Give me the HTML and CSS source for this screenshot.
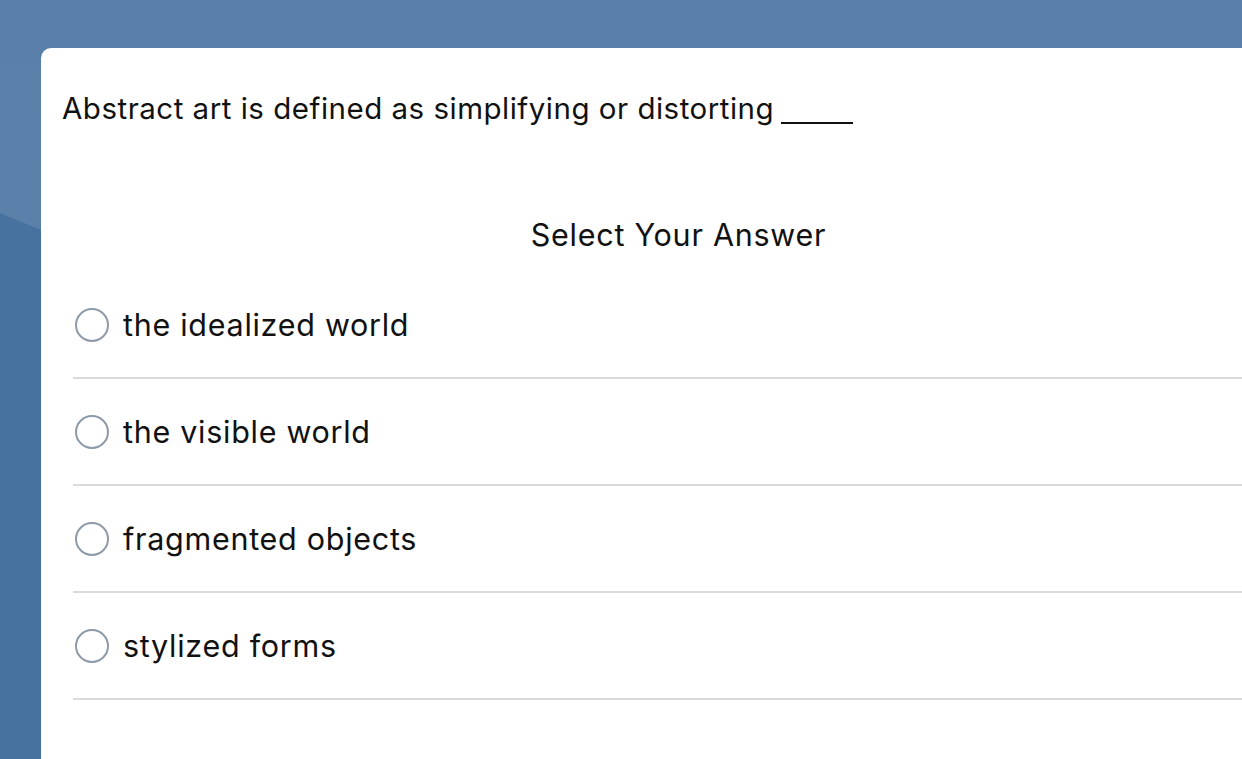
FILE: index.html
```html
<!DOCTYPE html>
<html>
<head>
<meta charset="utf-8">
<link rel="stylesheet" href="styles.css">
</head>
<body>
<div class="bg"><div class="bg-shade"></div></div>
<main class="card">
  <p class="question">Abstract art is defined as simplifying or distorting <span class="blank"></span></p>
  <h2 class="prompt">Select Your Answer</h2>
  <ul class="options">
    <li class="option"><span class="radio"></span><span class="label">the idealized world</span></li>
    <li class="option"><span class="radio"></span><span class="label">the visible world</span></li>
    <li class="option"><span class="radio"></span><span class="label">fragmented objects</span></li>
    <li class="option"><span class="radio"></span><span class="label">stylized forms</span></li>
  </ul>
</main>
</body>
</html>
```
FILE: styles.css
```css
html, body {
  margin: 0;
  height: 100%;
  overflow: hidden;
}
body {
  background: #5a80a9;
  padding: 48px 0 0 41px;
  box-sizing: border-box;
  font-family: Inter, "Noto Sans", "Liberation Sans", sans-serif;
  color: #111;
}
.bg {
  position: fixed;
  inset: 0;
  background: linear-gradient(180deg, #5a7fa8 0%, #5d83ab 100%);
  z-index: -1;
}
.bg-shade {
  position: absolute;
  inset: 0;
  background: #47729f;
  clip-path: polygon(0 213px, 41px 230px, 41px 100%, 0 100%);
}
.card {
  background: #fff;
  height: 100%;
  border-top-left-radius: 10px;
  padding: 1px 0 0 0;
  box-sizing: border-box;
}
.question {
  margin: 39px 0 0 21px;
  font-size: 29.5px;
  line-height: 40px;
  letter-spacing: 0.5px;
}
.blank {
  display: inline-block;
  width: 72px;
  height: 2px;
  background: #111;
  vertical-align: -5px;
  margin-left: -2px;
}
.prompt {
  margin: 87px 0 0 0;
  padding-left: 74px;
  font-weight: 400;
  font-size: 30.5px;
  line-height: 40px;
  text-align: center;
  letter-spacing: 0.75px;
}
.options {
  list-style: none;
  margin: 17px 0 0 32px;
  padding: 0;
}
.option {
  display: flex;
  align-items: center;
  gap: 14px;
  height: 105px;
  border-bottom: 2px solid #dadada;
  padding-left: 2px;
}
.radio {
  width: 34px;
  height: 34px;
  border: 2px solid #8d9aa7;
  border-radius: 50%;
  box-sizing: border-box;
  flex: none;
}
.label {
  font-size: 30.5px;
  letter-spacing: 0.72px;
}
```
